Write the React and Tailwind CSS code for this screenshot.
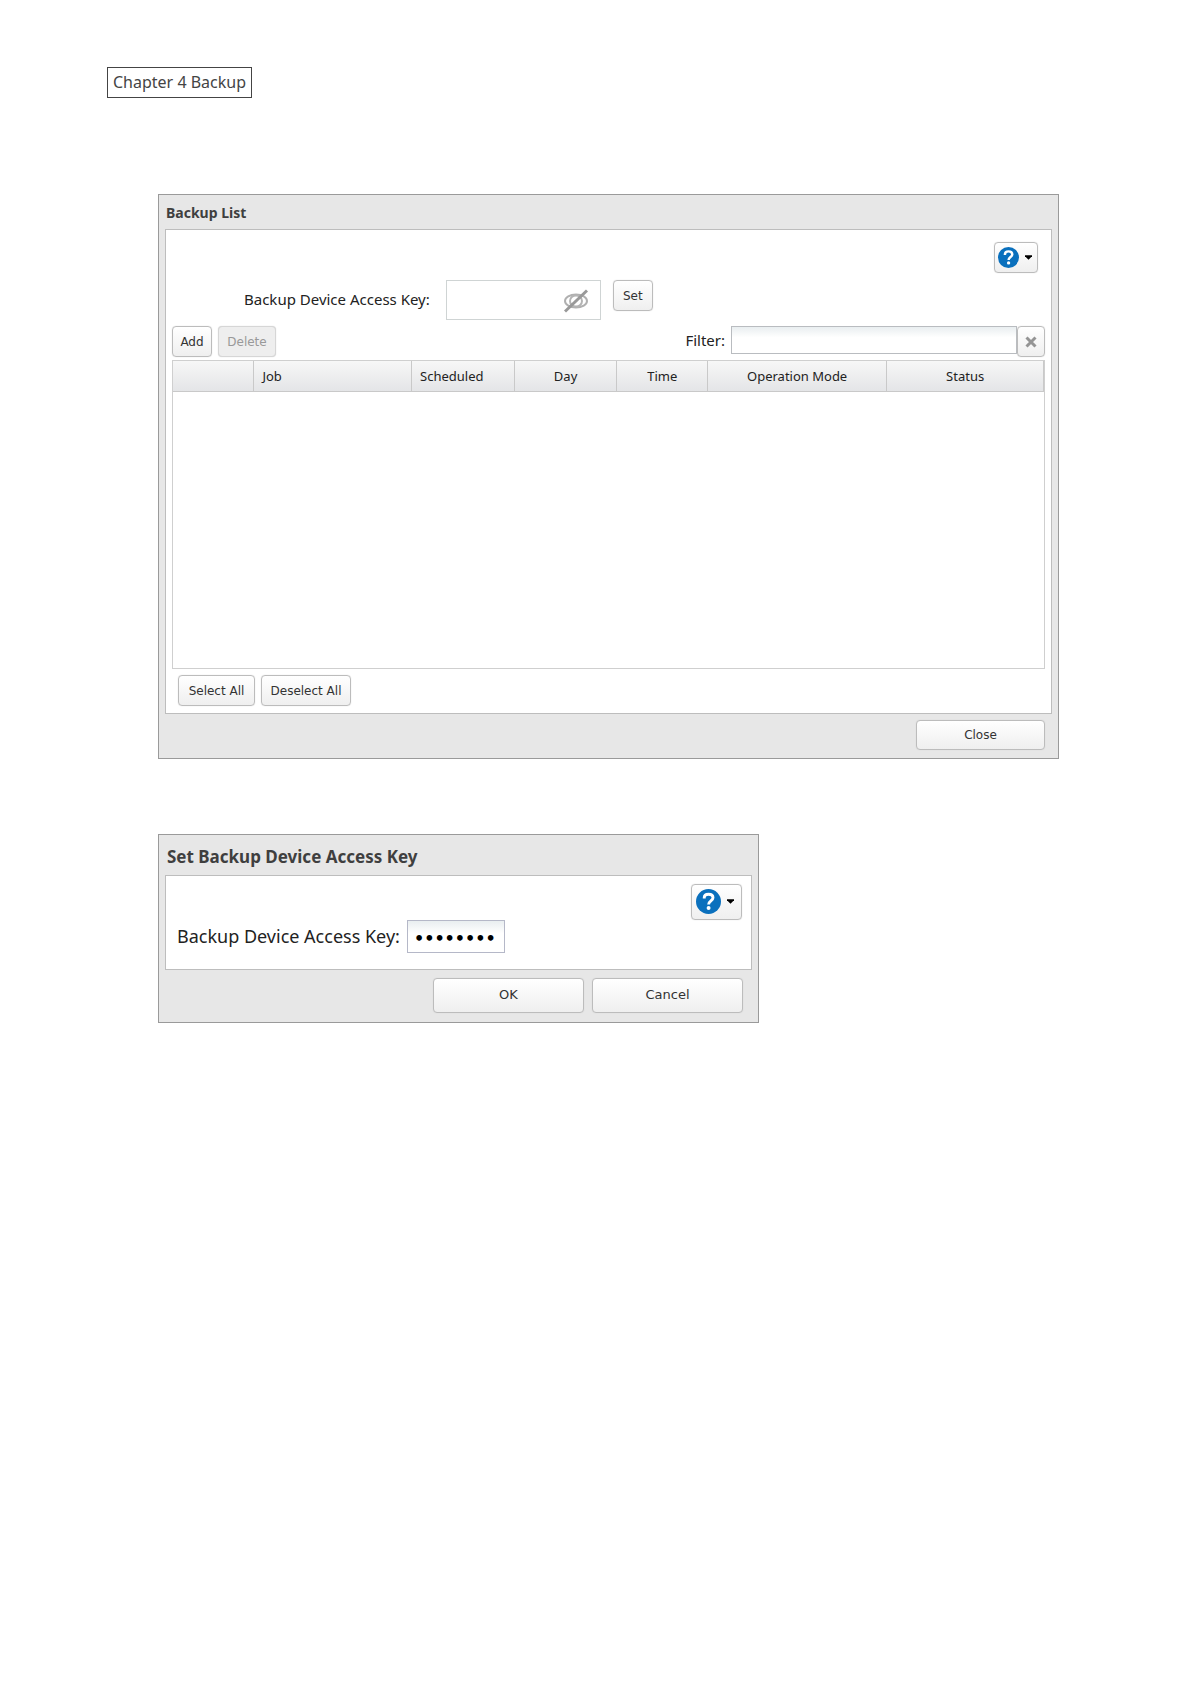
import React from 'react';

const UI_FONT = "font-['Noto_Sans','Open_Sans',sans-serif]";
const BUTTON_FONT = "font-['DejaVu_Sans',sans-serif]";

function Button({ className = '', disabled = false, children, ...rest }) {
  const tone = disabled
    ? 'border-[#d6d6d6] bg-[#eeeeee] text-[#999999]'
    : 'border-[#bcbcbc] bg-linear-to-b from-white to-[#efefef] text-[#333333]';
  return (
    <button
      type="button"
      disabled={disabled}
      className={`flex shrink-0 items-center justify-center rounded border shadow-[0_0_1px_#cccccc] ${BUTTON_FONT} ${tone} ${className}`}
      {...rest}
    >
      {children}
    </button>
  );
}

function HelpButton({ className, iconClass }) {
  return (
    <Button className={className} aria-label="Help">
      <svg viewBox="0 0 24 24" className={iconClass} aria-hidden="true">
        <circle cx="12" cy="12" r="12" fill="#0a70bd" />
        <path
          d="M7.9 9.2V8.5C7.9 6.2 9.5 5 12 5s4.3 1.3 4.3 3.5c0 2.7-4.2 3.2-4.2 6.3"
          fill="none"
          stroke="#ffffff"
          strokeWidth="2.8"
        />
        <circle cx="12.1" cy="18.2" r="1.9" fill="#ffffff" />
      </svg>
      <svg viewBox="0 0 8 5" className="h-[5px] w-[7px]" aria-hidden="true">
        <path d="M0 0h8v1L4 5 0 1z" fill="#000000" />
      </svg>
    </Button>
  );
}

function Panel({ title, titleClass, className = '', footer, footerClass, children }) {
  return (
    <section className={`border border-[#9a9a9a] bg-[#e7e7e7] px-1.5 ${className}`}>
      <h2 className={`flex items-center font-bold text-[#3f3f3f] ${titleClass}`}>{title}</h2>
      <div className="border border-[#bdbdbd] bg-white">{children}</div>
      <div className={`flex justify-end ${footerClass}`}>{footer}</div>
    </section>
  );
}

function EyeOff() {
  return (
    <svg viewBox="0 0 26 24" className="h-6 w-[26px]" fill="none" aria-hidden="true">
      <ellipse cx="13" cy="12" rx="11" ry="6.5" stroke="#b0b0b0" strokeWidth="2" />
      <ellipse cx="13" cy="12" rx="6" ry="5.5" stroke="#b4b4b4" strokeWidth="2" />
      <path d="M2 22.5 24 1.5" stroke="#999999" strokeWidth="3" />
    </svg>
  );
}

const columns = [
  { label: '', width: 'w-[9.3%]', align: 'text-left' },
  { label: 'Job', width: 'w-[18.1%]', align: 'text-left' },
  { label: 'Scheduled', width: 'w-[11.8%]', align: 'text-left' },
  { label: 'Day', width: 'w-[11.8%]', align: 'text-center' },
  { label: 'Time', width: 'w-[10.4%]', align: 'text-center' },
  { label: 'Operation Mode', width: 'w-[20.6%]', align: 'text-center' },
  { label: 'Status', width: 'w-[18%]', align: 'text-center' },
];

function BackupList() {
  return (
    <Panel
      title="Backup List"
      titleClass="h-[34px] pt-0.5 pl-px text-sm"
      footerClass="pt-1.5 pr-[7px] pb-2"
      footer={<Button className="h-[30px] w-[129px] text-xs">Close</Button>}
    >
      <div className="px-1.5 pt-3 pb-[7px]">
        <div className="flex justify-end pr-[7px]">
          <HelpButton className="h-[31px] w-11 gap-1.5 pr-0.5" iconClass="h-[21px] w-[21px]" />
        </div>
        <div className="mt-[7px] flex pl-[72px]">
          <label htmlFor="list-key" className="flex h-10 items-center pb-0.5 text-[15px] whitespace-nowrap text-[#222222]">
            Backup Device Access Key:
          </label>
          <div className="ml-4 flex h-10 w-[155px] items-center border border-[#cfd4d4] pr-[11px]">
            <input id="list-key" type="password" className="h-full w-full min-w-0 flex-1 px-2 outline-none" />
            <button type="button" aria-label="Show access key" className="shrink-0 pt-0.5">
              <EyeOff />
            </button>
          </div>
          <Button className="ml-3 h-[31px] w-10 text-xs">Set</Button>
        </div>
        <div className="mt-1.5 flex items-start">
          <Button className="h-[31px] w-10 text-xs">Add</Button>
          <Button disabled className="ml-1.5 h-[31px] w-[58px] text-xs">
            Delete
          </Button>
          <label htmlFor="filter" className="ml-auto flex h-7 items-center text-[15px] text-[#222222]">
            Filter:
          </label>
          <input
            id="filter"
            type="text"
            className="ml-1.5 h-7 w-[286px] border border-[#b9bcc0] bg-linear-to-b from-[#e9eef0] to-white to-40% px-2 text-sm outline-none"
          />
          <Button className="h-[31px] w-7" aria-label="Clear filter">
            <svg viewBox="0 0 12 12" className="h-3 w-3" aria-hidden="true">
              <path d="M1.5 1.5l9 9M10.5 1.5l-9 9" stroke="#949494" strokeWidth="3" />
            </svg>
          </Button>
        </div>
        <div className="mt-[3px] h-[309px] border border-[#cfcfcf]">
          <table className="w-full table-fixed border-collapse">
            <thead>
              <tr className="h-[30px] bg-linear-to-b from-[#f7f7f7] to-[#e4e5e7]">
                {columns.map((c) => (
                  <th
                    key={c.label}
                    scope="col"
                    className={`border-r border-b border-[#c9c9c9] px-2 pt-0.5 text-[13px] font-normal text-[#222222] ${c.width} ${c.align}`}
                  >
                    {c.label}
                  </th>
                ))}
              </tr>
            </thead>
            <tbody />
          </table>
        </div>
        <div className="mt-1.5 flex gap-1.5 pl-1.5">
          <Button className="h-[31px] w-[77px] text-xs">Select All</Button>
          <Button className="h-[31px] w-[90px] text-xs">Deselect All</Button>
        </div>
      </div>
    </Panel>
  );
}

function SetKeyDialog() {
  return (
    <Panel
      title="Set Backup Device Access Key"
      className="mt-[75px] max-w-[601px]"
      titleClass="h-10 pt-1 pl-0.5 text-[17px]"
      footerClass="gap-2 pt-2 pr-[9px] pb-[9px]"
      footer={
        <>
          <Button className="h-[35px] w-[151px] pb-0.5 text-[13px]">OK</Button>
          <Button className="h-[35px] w-[151px] pb-0.5 text-[13px]">Cancel</Button>
        </>
      }
    >
      <div className="pt-2 pr-[9px] pb-4 pl-[11px]">
        <div className="flex justify-end">
          <HelpButton className="h-9 w-[51px] gap-1.5 pr-1 pb-0.5" iconClass="h-[25px] w-[25px]" />
        </div>
        <div className="flex items-center">
          <label htmlFor="dialog-key" className="pb-0.5 text-lg whitespace-nowrap text-[#222222]">
            Backup Device Access Key:
          </label>
          <input
            id="dialog-key"
            type="password"
            defaultValue="password"
            className="ml-[7px] h-[33px] w-[98px] border border-[#b5b8c8] bg-linear-to-b from-[#e9eef0] to-white to-40% px-[6px] pt-1 font-['DejaVu_Sans',sans-serif] text-base font-bold text-black outline-none"
          />
        </div>
      </div>
    </Panel>
  );
}

export default function App() {
  return (
    <main className={`min-h-screen bg-white pt-[67px] pr-[132px] pb-16 pl-[107px] leading-normal ${UI_FONT}`}>
      <header className="flex">
        <h1 className="flex h-[31px] items-center border border-[#444444] px-[5px] pb-0.5 text-base text-[#444444]">
          Chapter 4 Backup
        </h1>
      </header>
      <div className="mt-24 pl-[51px]">
        <BackupList />
        <SetKeyDialog />
      </div>
    </main>
  );
}
